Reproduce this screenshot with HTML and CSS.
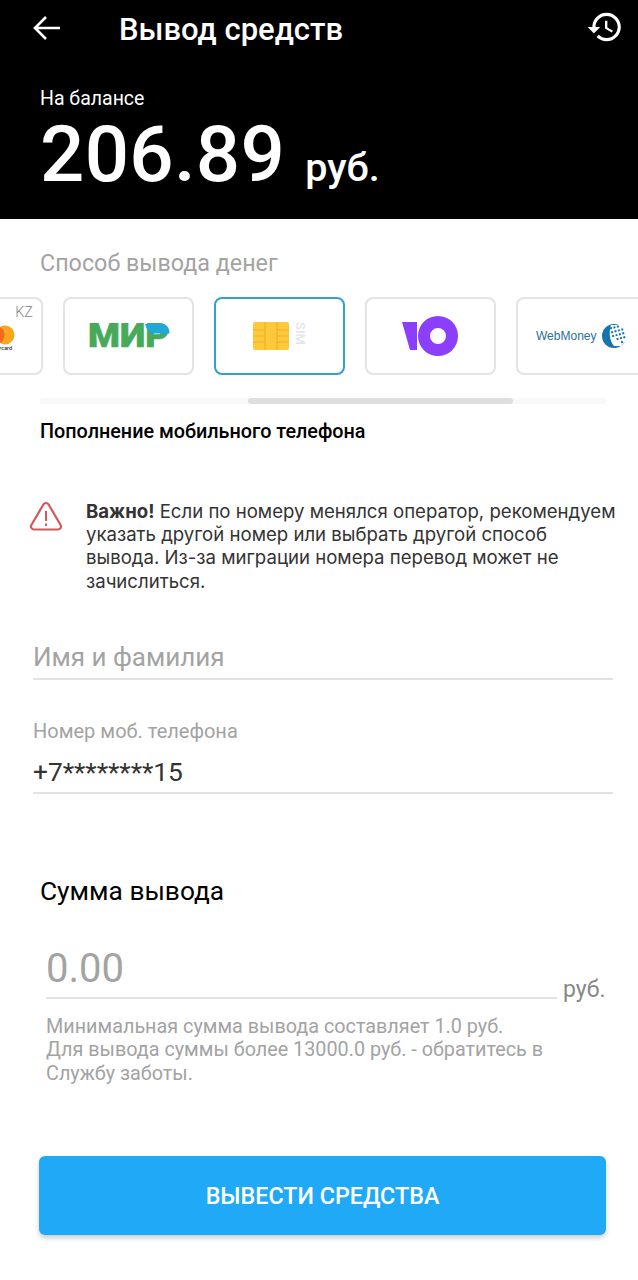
FILE: index.html
```html
<!DOCTYPE html>
<html>
<head lang="en">
    <meta charset="utf-8">
    <title>Вывод средств</title>
    <link rel="stylesheet" href="styles.css">
</head>
<body>

<header class="top">
    <div class="toolbar">
        <svg class="back" width="28" height="26" viewBox="0 0 28 26"><path d="M27 13H2M13 2 2 13l11 11" fill="none" stroke="#fff" stroke-width="2.6"/></svg>
        <h1>Вывод средств</h1>
        <svg class="history" width="38" height="38" viewBox="0 0 24 24"><path fill="#fff" d="M13 3c-4.97 0-9 4.03-9 9H1l3.89 3.89.07.14L9 12H6c0-3.87 3.13-7 7-7s7 3.13 7 7-3.13 7-7 7c-1.93 0-3.68-.79-4.94-2.06l-1.42 1.42C8.27 19.99 10.51 21 13 21c4.97 0 9-4.03 9-9s-4.03-9-9-9zm-1 5v5l4.28 2.54.72-1.21-3.5-2.08V8H12z"/></svg>
    </div>
    <div class="balance-label">На балансе</div>
    <div class="balance"><span class="amount">206.89</span><span class="currency">руб.</span></div>
</header>

<section class="method">
    <h2>Способ вывода денег</h2>
    <div class="cards">
        <div class="card card-kz">
            <span class="kz">KZ</span>
            <svg class="mc" width="42" height="36" viewBox="0 0 42 36"><circle cx="17" cy="14" r="9.500" fill="#e8421f"/><circle cx="27" cy="14" r="9.500" fill="#f8a51f"/><path d="M22 5.900a9.500 9.500 0 0 1 0 16.200 9.500 9.500 0 0 1 0-16.200z" fill="#f06a1f"/></svg>
            <span class="mc-name">mastercard</span>
        </div>
        <div class="card">
            <svg width="82" height="26" viewBox="0 0 82 26">
                <text class="mir-text" x="0" y="24" textLength="81" lengthAdjust="spacingAndGlyphs">МИР</text>
                <path d="M57 1h16c5 0 8.500 3 8.500 9.500H65C61 10.500 58.500 6 57 1z" fill="#1ea8dc"/>
            </svg>
        </div>
        <div class="card card-active">
            <svg class="chip" width="36" height="28" viewBox="0 0 36 28">
                <rect width="36" height="28" rx="2" fill="#fdc93a"/>
                <path d="M0 8h12M0 14h12M0 20h12M12 0v28M24 0v28M36 8H24M36 14H24M36 20H24" fill="none" stroke="#f0b02a" stroke-width="1.200"/>
            </svg>
            <span class="sim">SIM</span>
        </div>
        <div class="card card-yu">
            <svg width="56" height="40" viewBox="0 0 56 40">
                <path d="M0 6h15v28H8z" fill="#8b3ffd"/>
                <path fill-rule="evenodd" d="M36 0a20 20 0 1 1 0 40 20 20 0 0 1 0-40zm0 12a8 8 0 1 0 0 16 8 8 0 0 0 0-16z" fill="#8b3ffd"/>
            </svg>
        </div>
        <div class="card card-wm">
            <span class="wm-name">WebMoney</span>
            <svg width="24" height="26" viewBox="0 0 24 26">
                <circle cx="12" cy="13" r="12" fill="#1874ae"/>
                <path d="M9 2h12l3 7v8l-5 6H12C7 17 7 9 9 2z" fill="#fff"/>
                <g transform="rotate(-15 15 12)" fill="#1874ae">
                    <path d="M10 3h2v2h-2zM13.500 3h2v2h-2zM17 3h2v2h-2zM10 7h2v2h-2zM13.500 7h2v2h-2zM17 7h2v2h-2zM20.500 7h2v2h-2zM10 11h2v2h-2zM13.500 11h2v2h-2zM17 11h2v2h-2zM20.500 11h2v2h-2zM13.500 15h2v2h-2zM17 15h2v2h-2zM20.500 15h2v2h-2zM17 19h2v2h-2z"/>
                </g>
            </svg>
        </div>
    </div>
    <div class="scrollbar"><div class="thumb"></div></div>
    <div class="method-name">Пополнение мобильного телефона</div>
</section>

<section class="notice">
    <svg class="warn" width="34" height="30" viewBox="0 0 34 30">
        <path d="M14.400 3.500a3 3 0 0 1 5.200 0L31.600 24a3 3 0 0 1-2.600 4.500H5A3 3 0 0 1 2.400 24z" fill="none" stroke="#cf5a58" stroke-width="2.200"/>
        <path d="M17 10v10M17 22.500v2.500" fill="none" stroke="#cf5a58" stroke-width="2"/>
    </svg>
    <p><b>Важно!</b> Если по номеру менялся оператор, рекомендуем указать другой номер или выбрать другой способ вывода. Из-за миграции номера перевод может не зачислиться.</p>
</section>

<section class="fields">
    <div class="field field-name">Имя и фамилия</div>
    <div class="field-label">Номер моб. телефона</div>
    <div class="field field-phone">+7********15</div>
</section>

<section class="sum">
    <h2>Сумма вывода</h2>
    <div class="sum-row">
        <div class="sum-input">0.00</div>
        <span class="sum-currency">руб.</span>
    </div>
    <p class="hint">Минимальная сумма вывода составляет 1.0 руб.<br>Для вывода суммы более 13000.0 руб. - обратитесь в Службу заботы.</p>
</section>

<button class="submit">ВЫВЕСТИ СРЕДСТВА</button>

</body>
</html>
```

FILE: styles.css
```css
* { box-sizing: border-box; }

body {
    margin: 0;
    width: 638px;
    height: 1280px;
    overflow: hidden;
    background: #fff;
    font-family: Roboto, sans-serif;
    color: #000;
}

h1, h2, p { margin: 0; font-weight: normal; }

.top {
    height: 219px;
    background: #000;
    color: #fff;
    padding: 0 14px 0 33px;
}

.toolbar {
    display: flex;
    align-items: center;
    height: 58px;
}

.toolbar h1 {
    margin-left: 58px;
    font-size: 31px;
    font-weight: 500;
    flex: 1;
}

.back { margin-bottom: 2px; }
.history { margin-bottom: 4px; }

.balance-label {
    margin: 29px 0 0 7px;
    font-size: 19.500px;
    line-height: 24px;
}

.balance {
    display: flex;
    align-items: baseline;
    margin: 4px 0 0 7px;
    line-height: 80px;
}

.amount { font-size: 78px; font-weight: 500; letter-spacing: 0.300px; }
.currency { margin-left: 20px; font-size: 39.500px; font-weight: 500; }

.method { padding-top: 30px; }

.method h2 {
    margin-left: 40px;
    font-size: 23.300px;
    line-height: 28px;
    color: #a3a3a3;
}

.cards {
    display: flex;
    gap: 20px;
    margin: 20px 0 0 -88px;
}

.card {
    position: relative;
    flex: none;
    display: flex;
    align-items: center;
    justify-content: center;
    width: 131px;
    height: 78px;
    background: #fff;
    border: 2px solid #e3e3e3;
    border-radius: 8px;
}

.card-active { border-color: #2fa3c9; }

.kz {
    position: absolute;
    top: 5px;
    right: 8px;
    font-size: 14.500px;
    font-weight: 300;
    color: #888;
}

.mc { position: absolute; left: 64px; top: 22px; }

.mc-name {
    position: absolute;
    left: 70px;
    top: 46px;
    font-size: 5.500px;
    font-weight: 500;
    color: #333;
}

.mir-text {
    font-family: Roboto, sans-serif;
    font-size: 34px;
    font-weight: 900;
    fill: #47a95a;
    stroke: #47a95a;
    stroke-width: 0.600;
}

.chip { margin-right: 17px; }

.sim {
    position: absolute;
    left: 73px;
    top: 27px;
    font-size: 13px;
    font-weight: 500;
    color: #e2e6ea;
    transform: rotate(90deg);
}

.card-yu svg { margin-right: 2px; }

.card-wm { justify-content: flex-start; padding-left: 18px; gap: 6px; }

.wm-name {
    font-family: "Liberation Sans", sans-serif;
    font-size: 12px;
    color: #2a6f97;
    white-space: nowrap;
}

.scrollbar {
    height: 6px;
    margin: 23px 32px 0 40px;
    background: #f8f8f8;
    border-radius: 3px;
}

.thumb {
    width: 265px;
    height: 6px;
    margin-left: 208px;
    background: #dedede;
    border-radius: 3px;
}

.method-name {
    margin: 16px 0 0 40px;
    font-size: 19.800px;
    font-weight: 500;
    line-height: 24px;
}

.notice {
    display: flex;
    margin-top: 56px;
    padding-left: 29px;
}

.warn { flex: none; margin-top: 1px; }

.notice p {
    margin-left: 23px;
    width: 535px;
    font-family: Inter, sans-serif;
    font-size: 18.600px;
    line-height: 23.200px;
    color: #333;
}

.fields { margin: 0 25px 0 33px; }

.field {
    border-bottom: 2px solid #e2e2e2;
    font-size: 26px;
}

.field-name {
    margin-top: 45px;
    height: 42px;
    line-height: 38px;
    color: #a3a3a3;
}

.field-label {
    margin-top: 39px;
    font-size: 20px;
    line-height: 24px;
    color: #a3a3a3;
}

.field-phone {
    margin-top: 14px;
    height: 37px;
    font-size: 26.300px;
    line-height: 30px;
    color: #333;
}

.sum { padding: 0 32px 0 46px; }

.sum h2 {
    margin: 81px 0 0 -6px;
    font-size: 26.300px;
    line-height: 32px;
}

.sum-row {
    display: flex;
    align-items: flex-end;
    margin-top: 39px;
}

.sum-input {
    width: 511px;
    height: 53px;
    border-bottom: 2px solid #e2e2e2;
    font-size: 40px;
    line-height: 46px;
    color: #a3a3a3;
}

.sum-currency {
    margin: 0 0 -5px 6px;
    font-size: 23px;
    line-height: 28px;
    color: #888;
}

.hint {
    margin-top: 16px;
    font-size: 19.800px;
    line-height: 23.400px;
    color: #a3a3a3;
}

.submit {
    display: block;
    width: 567px;
    height: 79px;
    margin: 71px 0 0 39px;
    border: 0;
    border-radius: 6px;
    background: #20a9f7;
    box-shadow: 0 3px 5px rgba(0, 0, 0, 0.2);
    color: #fff;
    font-family: Roboto, sans-serif;
    font-size: 23.300px;
    font-weight: 500;
}
```
